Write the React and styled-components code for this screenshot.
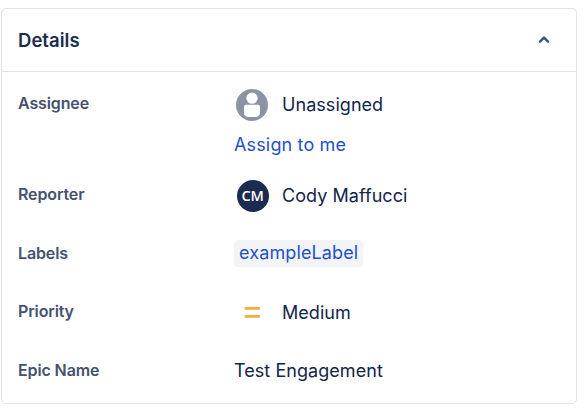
import React from "react";
import styled, { createGlobalStyle } from "styled-components";

const GlobalStyle = createGlobalStyle`
  * { box-sizing: border-box; }
  body { margin: 0; background: #fff; font-family: Inter, sans-serif; color: #172b4d; }
`;

const Panel = styled.section`
  width: 576px;
  height: 396px;
  margin: 8px 0 0 1px;
  border: 1px solid #dfe1e4;
  border-radius: 5px;
  background: #fff;
`;

const Header = styled.header`
  display: flex;
  align-items: center;
  justify-content: space-between;
  height: 63px;
  padding: 0 24px 0 16px;
  border-bottom: 1px solid #dfe1e4;
`;

const Title = styled.h2`
  margin: 0;
  font: 600 18.5px/24px Inter, sans-serif;
  letter-spacing: 0.03px;
  color: #1c2b50;
`;

const Fields = styled.dl`
  margin: 0;
  padding: 16px 16px 0;
`;

const Row = styled.div`
  display: grid;
  grid-template-columns: 216px 1fr;
  height: ${(p) => p.$height}px;
`;

const Name = styled.dt`
  font: 600 16px/30px Inter, sans-serif;
  letter-spacing: -0.12px;
  color: #44526f;
`;

const Value = styled.dd`
  margin: 0;
  font-size: 18px;
  line-height: ${(p) => p.$line || 34}px;
  letter-spacing: 0.05px;
  color: #13244a;
`;

const Person = styled.div`
  display: flex;
  align-items: center;
  gap: 13px;
`;

const IconSlot = styled.span`
  display: flex;
  justify-content: center;
  width: 35px;
`;

const Initials = styled.span`
  width: 32px;
  height: 32px;
  margin-left: 2px;
  border-radius: 50%;
  background: #1c2b4f;
  color: #fff;
  font: 600 14.5px/32px "Open Sans", sans-serif;
  letter-spacing: -0.3px;
  text-align: center;
`;

const Link = styled.a`
  display: block;
  margin-top: 6px;
  color: #1f50cb;
  letter-spacing: 0.15px;
`;

const Tag = styled.span`
  display: block;
  width: fit-content;
  height: 27px;
  margin-top: 2px;
  padding: 0 5px;
  border-radius: 4px;
  background: #f3f4f6;
  color: #1f50cb;
  line-height: 26px;
  letter-spacing: 0.12px;
`;

export default function App() {
  return (
    <>
      <GlobalStyle />
      <Panel>
        <Header>
          <Title>Details</Title>
          <svg width="16" height="16" viewBox="0 0 16 16" fill="none" stroke="#44526f" strokeWidth="2.5" strokeLinecap="round" strokeLinejoin="round"><path d="M4 9.700l4-4 4 4" /></svg>
        </Header>
        <Fields>
          <Row $height={91}>
            <Name>Assignee</Name>
            <Value>
              <Person>
                <IconSlot>
                  <svg width="32" height="32" viewBox="0 0 32 32">
                    <circle cx="16" cy="16" r="16" fill="#8c93a4" />
                    <circle cx="16" cy="9.2" r="5.6" fill="#fff" />
                    <path d="M10 15.8h12a2 2 0 0 1 2 2v6c0 2.6-1.8 4.2-4.4 4.2h-7.2C9.8 28 8 26.4 8 23.8v-6a2 2 0 0 1 2-2z" fill="#fff" />
                  </svg>
                </IconSlot>
                Unassigned
              </Person>
              <Link>Assign to me</Link>
            </Value>
          </Row>
          <Row $height={59}>
            <Name>Reporter</Name>
            <Value><Person><IconSlot><Initials>CM</Initials></IconSlot>Cody Maffucci</Person></Value>
          </Row>
          <Row $height={58}>
            <Name>Labels</Name>
            <Value><Tag>exampleLabel</Tag></Value>
          </Row>
          <Row $height={59}>
            <Name>Priority</Name>
            <Value>
              <Person>
                <IconSlot>
                  <svg width="18" height="14" viewBox="0 0 18 14" stroke="#f4ac42" strokeWidth="2.7" strokeLinecap="round"><path d="M2.7 2.4h13.2M2.7 10.4h13.2" /></svg>
                </IconSlot>
                Medium
              </Person>
            </Value>
          </Row>
          <Row $height={36}>
            <Name>Epic Name</Name>
            <Value $line={32}>Test Engagement</Value>
          </Row>
        </Fields>
      </Panel>
    </>
  );
}
